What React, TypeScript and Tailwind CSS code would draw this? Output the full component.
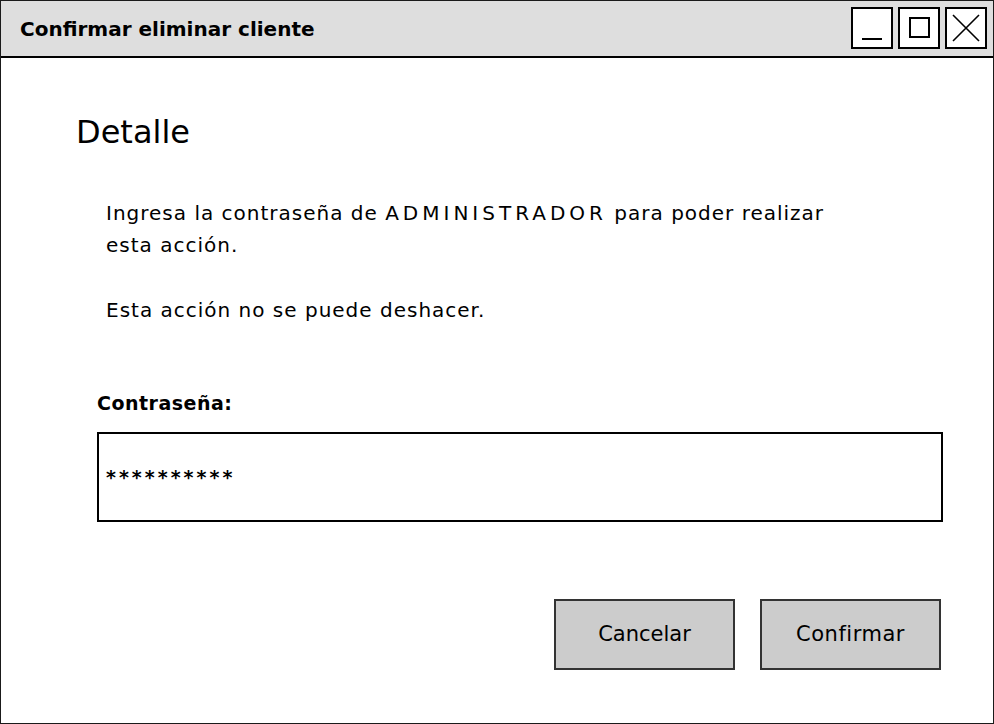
import React from "react";

const font = { fontFamily: '"Comic Sans MS", "DejaVu Sans", sans-serif' };

const WinButton = ({ children }: { children: React.ReactNode }) => (
  <div className="w-[42px] h-[42px] border-2 border-black bg-white flex items-center justify-center">
    {children}
  </div>
);

const App = () => {
  return (
    <div
      className="w-[994px] h-[724px] border border-[#1a1a1a] bg-white flex flex-col text-black"
      style={font}
    >
      <div className="h-[57px] shrink-0 bg-[#dedede] border-b-2 border-black flex items-center justify-between pl-[19px] pr-[6px]">
        <span className="text-[20px] font-bold">Confirmar eliminar cliente</span>
        <div className="flex gap-[5px] mt-[-2px]">
          <WinButton>
            <div className="w-[20px] h-[2px] bg-black mt-[22px]" />
          </WinButton>
          <WinButton>
            <div className="w-[21px] h-[21px] border-2 border-black" />
          </WinButton>
          <WinButton>
            <svg width="32" height="32" viewBox="0 0 32 32">
              <path d="M3 3 L29 29 M29 3 L3 29" stroke="black" strokeWidth="1.6" fill="none" />
            </svg>
          </WinButton>
        </div>
      </div>

      <div className="flex-1 flex flex-col pl-[75px] pr-[50px]">
        <h1 className="text-[32px] leading-[40px] mt-[54px]">Detalle</h1>
        <div className="pl-[30px] mt-[45px] text-[20px] leading-[32px] tracking-[1px]">
          <p>
            Ingresa la contraseña de <span className="tracking-[4px]">ADMINISTRADOR</span> para poder realizar
            <br />
            esta acción.
          </p>
          <p className="mt-[33px]">Esta acción no se puede deshacer.</p>
        </div>

        <label className="block ml-[21px] mt-[63px] text-[19px] font-bold leading-[28px] tracking-[0.5px]">
          Contraseña:
        </label>
        <div className="ml-[21px] mt-[15px] h-[90px] border-2 border-black flex items-center pl-[7px]">
          <span className="text-[19px] font-bold tracking-[3px]">**********</span>
        </div>

        <div className="flex justify-end gap-[25px] mt-[77px] pr-[2px]">
          <button className="w-[181px] h-[71px] bg-[#cccccc] border-2 border-[#333] text-[21px]">
            Cancelar
          </button>
          <button className="w-[181px] h-[71px] bg-[#cccccc] border-2 border-[#333] text-[21px] tracking-[0.5px]">
            Confirmar
          </button>
        </div>
      </div>
    </div>
  );
};

export default App;
